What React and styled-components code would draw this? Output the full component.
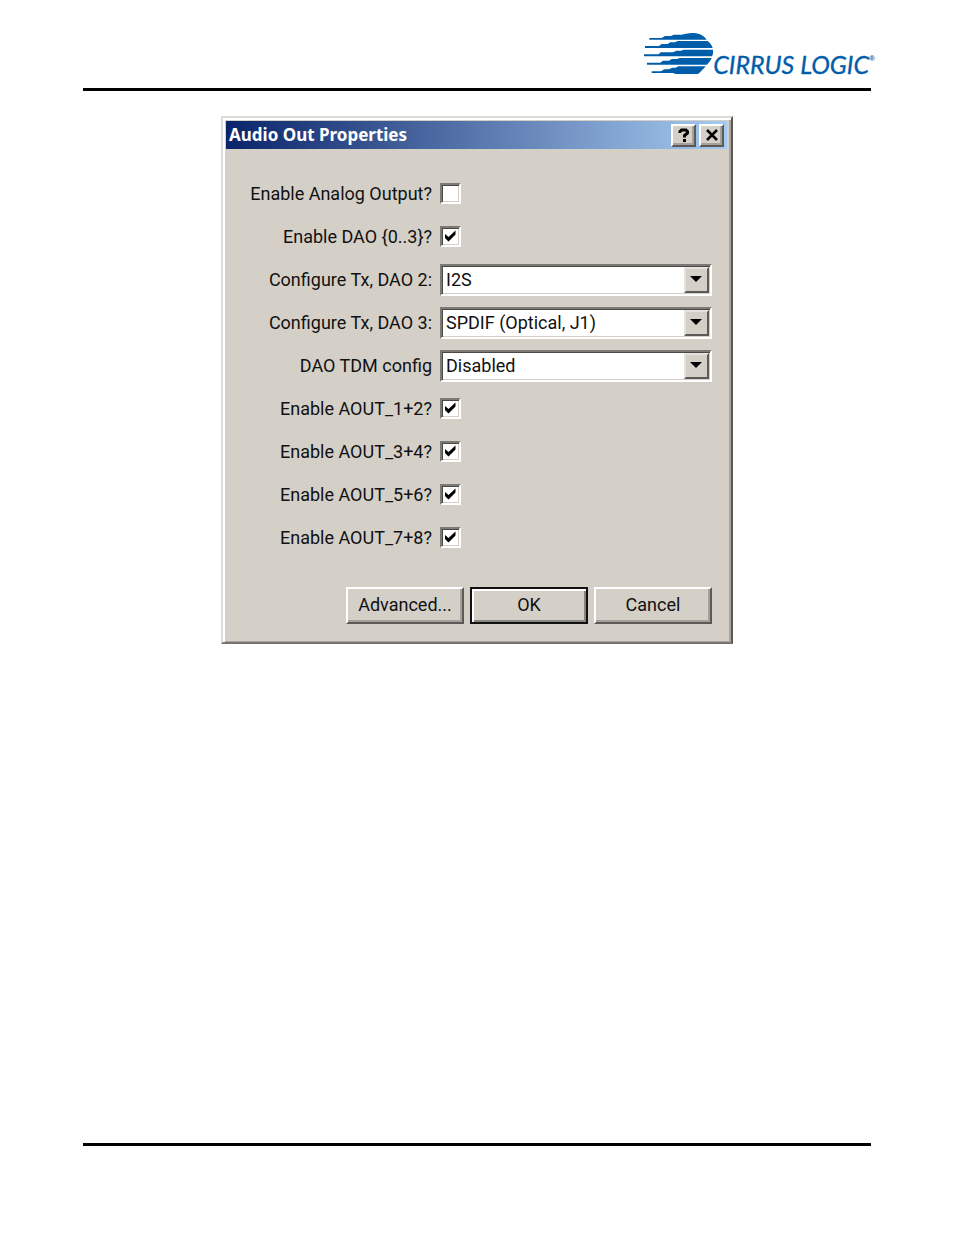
import React from "react"
import styled, { createGlobalStyle, css } from "styled-components"

const GlobalStyle = createGlobalStyle`
  * {
    box-sizing: border-box;
  }
  body {
    margin: 0;
    background-color: #fff;
  }
`

const raised = css`
  border: solid 2px;
  border-color: #fff #5c5a56 #5c5a56 #fff;
  box-shadow: inset -2px -2px 0 #a5a19a;
`

const sunken = css`
  border: solid 2px;
  border-color: #7d7a75 #fff #fff #7d7a75;
  box-shadow: inset 1px 1px 0 #4c4a47, inset -1px -1px 0 #d4d0c8;
`

const Page = styled.div`
  min-height: 100vh;
  padding: 32px 83px 89px;
  display: flex;
  flex-direction: column;
`

const Header = styled.header`
  height: 59px;
  border-bottom: solid 3px #000;
  display: flex;
  justify-content: flex-end;
`

const Brand = styled.div`
  display: flex;
  align-items: flex-start;
  margin-right: -4px;
  color: #005daa;
`

const CloudMark = styled.svg`
  width: 69px;
  height: 44px;
  fill: currentColor;
`

const BrandName = styled.span`
  padding-top: 17px;
  font: italic 25px/30px Lato, sans-serif;
  -webkit-text-stroke: 0.3px currentColor;
  white-space: nowrap;
`

const Registered = styled.span`
  padding-top: 22px;
  font: bold 8px/10px "Liberation Sans", Arial, sans-serif;
`

const Dialog = styled.section`
  width: 100%;
  max-width: 512px;
  margin: 25px auto 40px;
  background-color: #d4d0c8;
  border: solid 2px;
  border-color: #dedbd5 #5c5a56 #77746f #dedbd5;
  box-shadow: inset 2px 2px 0 #fff, inset -2px -1px 0 #aaa69f;
  font-family: Roboto, "Liberation Sans", Arial, sans-serif;
  font-size: 18px;
  color: #111;
`

const TitleBar = styled.div`
  height: 28px;
  margin: 3px 4px 0 3px;
  padding: 0 3px;
  display: flex;
  align-items: center;
  gap: 3px;
  background: linear-gradient(to right, #0a246a, #a6caf0);
`

const Title = styled.h1`
  flex: 1;
  margin: 0;
  color: #fff;
  font: bold 17px/24px "Noto Sans", "Open Sans", sans-serif;
`

const TitleButton = styled.button`
  width: 25px;
  height: 23px;
  padding: 0;
  display: flex;
  align-items: center;
  justify-content: center;
  background-color: #d4d0c8;
  ${raised}
`

const Glyph = styled.svg`
  width: 14px;
  height: 14px;
  fill: none;
  stroke: #000;
  stroke-width: ${(props) => props.$weight || 2};
`

const Form = styled.form`
  padding: 23px 19px 18px 2px;
`

const Row = styled.div`
  min-height: 43px;
  display: grid;
  grid-template-columns: 207px 1fr;
  column-gap: 8px;
  align-items: center;
`

const Label = styled.label`
  line-height: 22px;
  text-align: right;
  white-space: nowrap;
`

const CheckBox = styled.input`
  appearance: none;
  width: 21px;
  height: 21px;
  margin: 0;
  background-color: #fff;
  ${sunken}
`

const CheckCell = styled.span`
  position: relative;
  display: flex;
  width: 21px;
`

const Tick = styled.svg`
  position: absolute;
  inset: 0;
  width: 21px;
  height: 21px;
  pointer-events: none;
  fill: #000;
  visibility: hidden;

  input:checked + & {
    visibility: visible;
  }
`

const SelectCell = styled.span`
  position: relative;
  display: flex;
`

const Select = styled.select`
  appearance: none;
  width: 100%;
  height: 32px;
  padding: 0 32px 0 4px;
  border-radius: 0;
  background-color: #fff;
  color: inherit;
  font: inherit;
  ${sunken}
`

const DropArrow = styled.span`
  position: absolute;
  top: 3px;
  right: 3px;
  bottom: 3px;
  width: 25px;
  padding: 0 2px 2px 0;
  display: flex;
  align-items: center;
  justify-content: center;
  pointer-events: none;
  background-color: #d4d0c8;
  border: solid 2px;
  border-color: #e6e3de #5c5a56 #5c5a56 #e6e3de;
`

const Triangle = styled.svg`
  width: 12px;
  height: 6px;
`

const Buttons = styled.div`
  margin-top: 28px;
  display: flex;
  justify-content: flex-end;
  gap: 6px;
`

const Button = styled.button`
  width: 118px;
  height: 37px;
  padding: 0 0 2px;
  background-color: #d4d0c8;
  color: inherit;
  font: inherit;
  ${raised}
  ${(props) => props.$primary && css`
    border-color: #111;
    box-shadow: inset 2px 2px 0 #fff, inset -2px -2px 0 #8a8781;
  `}
`

const FooterRule = styled.hr`
  width: 100%;
  height: 3px;
  margin: auto 0 0;
  border: 0;
  background-color: #000;
`

const fields = [
  { id: "analog", label: "Enable Analog Output?", checked: false },
  { id: "dao", label: "Enable DAO {0..3}?", checked: true },
  { id: "tx2", label: "Configure Tx, DAO 2:", value: "I2S" },
  { id: "tx3", label: "Configure Tx, DAO 3:", value: "SPDIF (Optical, J1)" },
  { id: "tdm", label: "DAO TDM config", value: "Disabled" },
  { id: "aout12", label: "Enable AOUT_1+2?", checked: true },
  { id: "aout34", label: "Enable AOUT_3+4?", checked: true },
  { id: "aout56", label: "Enable AOUT_5+6?", checked: true },
  { id: "aout78", label: "Enable AOUT_7+8?", checked: true },
]

const Field = ({ id, label, value, checked }) => (
  <Row>
    <Label htmlFor={id}>{label}</Label>
    {value ? (
      <SelectCell>
        <Select id={id} defaultValue={value}>
          <option>{value}</option>
        </Select>
        <DropArrow>
          <Triangle viewBox="0 0 12 6"><path d="M0 0H12L6 6Z" /></Triangle>
        </DropArrow>
      </SelectCell>
    ) : (
      <CheckCell>
        <CheckBox type="checkbox" id={id} defaultChecked={checked} />
        <Tick viewBox="0 0 21 21"><path d="M5 8L8.500 11L15.500 4.500V8.500L8.500 15.500L5 12Z" /></Tick>
      </CheckCell>
    )}
  </Row>
)

const Logo = () => (
  <Brand>
    <CloudMark viewBox="27 24 207 132" aria-hidden="true">
      <path d="M43 42H80L90 36H108L116 32H140C153 29 165 27 178 27C194 28 207 36 215 47H43Z" />
      <path d="M30 66H72L80 60H98L106 55H120L128 51H218C225 57 231 64 233 72H30Z" />
      <path d="M27 91H70L78 85H114L124 80H138L146 77H234C235 84 234 91 231 97H27Z" />
      <path d="M36 116H76L84 110H102L110 105H126L134 102H230C227 109 222 116 216 122H36Z" />
      <path d="M50 142H78L88 136H102L112 131H122L130 127H212C204 136 198 143 189 150H122L114 147H50Z" />
    </CloudMark>
    <BrandName>CIRRUS LOGIC</BrandName>
    <Registered>®</Registered>
  </Brand>
)

const App = () => {
  return (
    <Page>
      <GlobalStyle />
      <Header>
        <Logo />
      </Header>
      <Dialog>
        <TitleBar>
          <Title>Audio Out Properties</Title>
          <TitleButton type="button" aria-label="Help">
            <Glyph viewBox="0 0 14 14" $weight={3}>
              <path d="M3 5V3.500L4.500 2H9L10.500 3.500V5L7.500 7.500V9.500M7.500 11V14" />
            </Glyph>
          </TitleButton>
          <TitleButton type="button" aria-label="Close">
            <Glyph viewBox="0 0 14 14" $weight={2.5}>
              <path d="M2 2L12 12M12 2L2 12" />
            </Glyph>
          </TitleButton>
        </TitleBar>
        <Form onSubmit={(e) => e.preventDefault()}>
          {fields.map((field) => <Field key={field.id} {...field} />)}
          <Buttons>
            <Button type="button">Advanced...</Button>
            <Button type="submit" $primary>OK</Button>
            <Button type="button">Cancel</Button>
          </Buttons>
        </Form>
      </Dialog>
      <FooterRule />
    </Page>
  )
}

export default App
